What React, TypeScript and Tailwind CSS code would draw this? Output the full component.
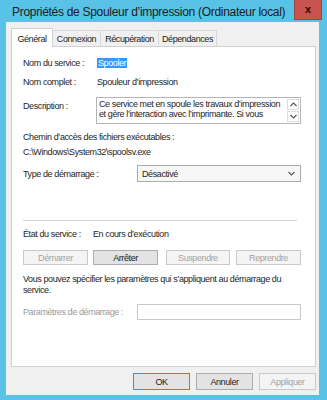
const font = "font-['Liberation_Sans',Arial,sans-serif]";

interface BtnProps {
  label: string;
  disabled?: boolean;
  isDefault?: boolean;
  className?: string;
}

const WinButton = ({ label, disabled, isDefault, className }: BtnProps) => {
  let look = 'border-[#adadad] bg-[#e3e3e3] text-[#1a1a1a]';
  if (disabled) look = 'border-[#c9c9c9] bg-[#f4f4f4] text-[#a3a3a3]';
  if (isDefault) look = 'border-[#4a8fc7] bg-[#e3e3e3] text-[#1a1a1a]';
  return (
    <div className={`flex items-center justify-center whitespace-nowrap border leading-[10px] ${look} ${className ?? ''}`}>
      {label}
    </div>
  );
};

const Chevron = ({ up }: { up?: boolean }) => (
  <svg width="7" height="5" viewBox="0 0 7 5" className="block">
    <path d={up ? 'M0.5 4 L3.5 1 L6.5 4' : 'M0.5 1 L3.5 4 L6.5 1'} fill="none" stroke="#555" strokeWidth="1.1" />
  </svg>
);

const tabs = ['Connexion', 'Récupération', 'Dépendances'];
const tabWidths = ['w-[49px]', 'w-[59px]', 'w-[59px]'];

export default function App() {
  return (
    <div className={`flex h-[400px] w-[327px] flex-col bg-[#58c2e7] text-[9px] tracking-[-0.4px] ${font}`}>
      {/* title bar */}
      <div className="flex h-[22px] items-start">
        <span className="ml-[12px] mt-[5px] whitespace-nowrap text-[12px] leading-[15px] tracking-[-0.3px] text-[#1c1c1c]">
          Propriétés de Spouleur d’impression (Ordinateur local)
        </span>
        <div className="ml-auto mr-[5px] flex h-[20px] w-[28px] items-center justify-center border border-t-0 border-[#a84040] bg-[#c9534f] text-[11px] font-bold leading-[11px] tracking-normal text-[#2a0a0a]">
          x
        </div>
      </div>

      {/* dialog body */}
      <div className="mb-[5px] ml-[6px] mr-[8px] flex flex-1 flex-col bg-[#f0f0f0]">
        <div className="ml-[5px] mt-[6px] flex h-[18px] items-end leading-[10px] text-[#1a1a1a]">
          <div className="relative z-10 -mb-px flex h-[19px] w-[42px] items-start justify-center border border-b-0 border-[#d0d0d0] bg-white pt-[5px]">
            Général
          </div>
          {tabs.map((t, i) => (
            <div
              key={t}
              className={`-ml-px flex h-[16px] items-center justify-center whitespace-nowrap border border-b-0 border-[#d9d9d9] bg-[#f0f0f0] ${tabWidths[i]}`}
            >
              {t}
            </div>
          ))}
        </div>

        {/* tab panel */}
        <div className="ml-[5px] mr-[3px] flex h-[321px] flex-col whitespace-nowrap border border-[#d0d0d0] bg-white pl-[11px] leading-[12px] text-[#1e1e1e]">
          <div className="mt-[10px] flex">
            <span className="w-[74px]">Nom du service :</span>
            <span className="mt-px h-[10px] bg-[#3399ff] px-px leading-[10px] text-white">Spooler</span>
          </div>
          <div className="mt-[7px] flex">
            <span className="w-[74px]">Nom complet :</span>
            <span>Spouleur d’impression</span>
          </div>
          <div className="mt-[9px] flex">
            <span className="mt-[3px] w-[73px]">Description :</span>
            <div className="flex h-[27px] w-[205px] border border-[#b5b5b5]">
              <div className="flex-1 overflow-hidden pl-[2px] pt-px leading-[10px]">
                <div>Ce service met en spoule les travaux d’impression</div>
                <div>et gère l’interaction avec l’imprimante. Si vous</div>
              </div>
              <div className="flex w-[13px] flex-col gap-px py-px pr-px">
                <div className="flex h-[11px] items-center justify-center border border-[#dcdcdc]">
                  <Chevron up />
                </div>
                <div className="flex h-[12px] items-center justify-center border border-[#dcdcdc]">
                  <Chevron />
                </div>
              </div>
            </div>
          </div>
          <div className="mt-[7px]">Chemin d’accès des fichiers exécutables :</div>
          <div className="mt-[3px]">C:\Windows\System32\spoolsv.exe</div>
          <div className="mt-[7px] flex items-center">
            <span className="w-[114px]">Type de démarrage :</span>
            <div className="flex h-[17px] w-[164px] items-center border border-[#acacac] bg-[#f7f7f7] pl-[4px] pr-[5px]">
              <span className="flex-1">Désactivé</span>
              <Chevron />
            </div>
          </div>
          <div className="mr-[18px] mt-[38px] h-px bg-[#d5d5d5]" />
          <div className="mt-[7px] flex">
            <span className="w-[70px]">État du service :</span>
            <span>En cours d’exécution</span>
          </div>
          <div className="mt-[10px] flex h-[15px]">
            <WinButton label="Démarrer" disabled className="w-[65px]" />
            <WinButton label="Arrêter" className="ml-[5px] w-[65px]" />
            <WinButton label="Suspendre" disabled className="ml-[8px] w-[64px]" />
            <WinButton label="Reprendre" disabled className="ml-[6px] w-[65px]" />
          </div>
          <div className="mr-[20px] mt-[9px] whitespace-normal leading-[11px]">
            Vous pouvez spécifier les paramètres qui s’appliquent au démarrage du service.
          </div>
          <div className="mt-[8px] flex items-center">
            <span className="w-[114px] text-[#9a9a9a]">Paramètres de démarrage :</span>
            <div className="h-[16px] w-[164px] border border-[#c8c8c8] bg-white" />
          </div>
        </div>

        {/* dialog buttons */}
        <div className="mr-[3px] mt-[6px] flex h-[17px] justify-end">
          <WinButton label="OK" isDefault className="w-[57px]" />
          <WinButton label="Annuler" className="ml-[6px] w-[57px]" />
          <WinButton label="Appliquer" disabled className="ml-[6px] w-[57px]" />
        </div>
      </div>
    </div>
  );
}
